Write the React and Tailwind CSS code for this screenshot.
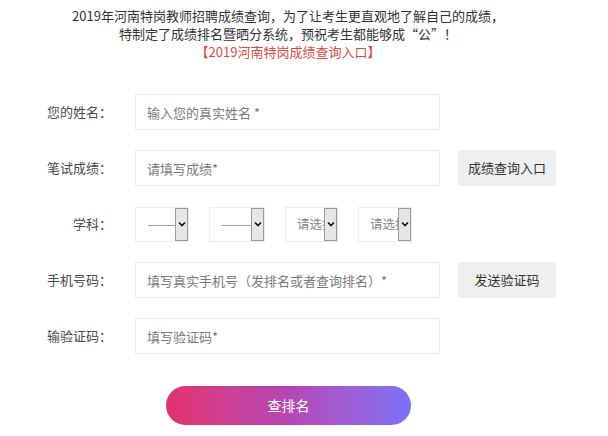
import React from "react";

const font = { fontFamily: '"Noto Sans CJK SC", "Noto Sans", sans-serif' };

function Label({ children }) {
  return (
    <div className="w-[114px] shrink-0 text-right text-[13px] text-[#4a4a4a] pr-[2px]">
      {children}
    </div>
  );
}

function TextInput({ placeholder }) {
  return (
    <input
      type="text"
      placeholder={placeholder}
      className="ml-[21px] h-full w-[305px] border border-[#ececec] bg-white pl-[11px] text-[13px] text-[#333] outline-none placeholder:text-[#7a7a7a]"
    />
  );
}

function SideButton({ children }) {
  return (
    <button className="ml-[18px] h-full w-[98px] rounded-[3px] bg-[#efefef] text-[13px] text-[#333]">
      {children}
    </button>
  );
}

function FakeSelect({ text, width }) {
  return (
    <div
      className={`relative flex h-[35px] items-center overflow-hidden border border-[#ececec] bg-white ${width}`}
    >
      <span className="whitespace-nowrap pl-[11px] text-[12.5px] text-[#888]">
        {text}
      </span>
      <div className="absolute right-0 top-0 flex h-full w-[13px] items-center justify-center border border-[#9a9a9a] bg-[#e6e6e6]">
        <svg width="8" height="6" viewBox="0 0 8 6">
          <path
            d="M1 1.5 L4 4.5 L7 1.5"
            fill="none"
            stroke="#111"
            strokeWidth="1.6"
          />
        </svg>
      </div>
    </div>
  );
}

export default function App() {
  return (
    <div className="min-h-[436px] w-[608px] bg-white pt-[7px]" style={font}>
      {/* intro */}
      <div className="w-[576px] text-center text-[13px] leading-[18px] text-[#333]">
        <p>2019年河南特岗教师招聘成绩查询，为了让考生更直观地了解自己的成绩，</p>
        <p>特制定了成绩排名暨晒分系统，预祝考生都能够成“公”！</p>
        <p className="text-[#e04a40]">【2019河南特岗成绩查询入口】</p>
      </div>

      {/* form */}
      <div className="mt-[33px] flex flex-col gap-5">
        <div className="flex h-9 items-center">
          <Label>您的姓名：</Label>
          <TextInput placeholder="输入您的真实姓名 *" />
        </div>
        <div className="flex h-9 items-center">
          <Label>笔试成绩：</Label>
          <TextInput placeholder="请填写成绩*" />
          <SideButton>成绩查询入口</SideButton>
        </div>
        <div className="flex h-9 items-center">
          <Label>学科：</Label>
          <div className="ml-[21px] flex gap-[20px]">
            <FakeSelect text="————" width="w-[54px]" />
            <FakeSelect text="————" width="w-[56px]" />
            <FakeSelect text="请选择" width="w-[53px]" />
            <FakeSelect text="请选择" width="w-[54px]" />
          </div>
        </div>
        <div className="flex h-9 items-center">
          <Label>手机号码：</Label>
          <TextInput placeholder="填写真实手机号（发排名或者查询排名）*" />
          <SideButton>发送验证码</SideButton>
        </div>
        <div className="flex h-9 items-center">
          <Label>输验证码：</Label>
          <TextInput placeholder="填写验证码*" />
        </div>
      </div>

      <button className="ml-[166px] mt-8 h-[39px] w-[245px] rounded-full bg-gradient-to-r from-[#e3306e] via-[#b645b5] to-[#7c70f8] text-[14px] text-white">
        查排名
      </button>
    </div>
  );
}
